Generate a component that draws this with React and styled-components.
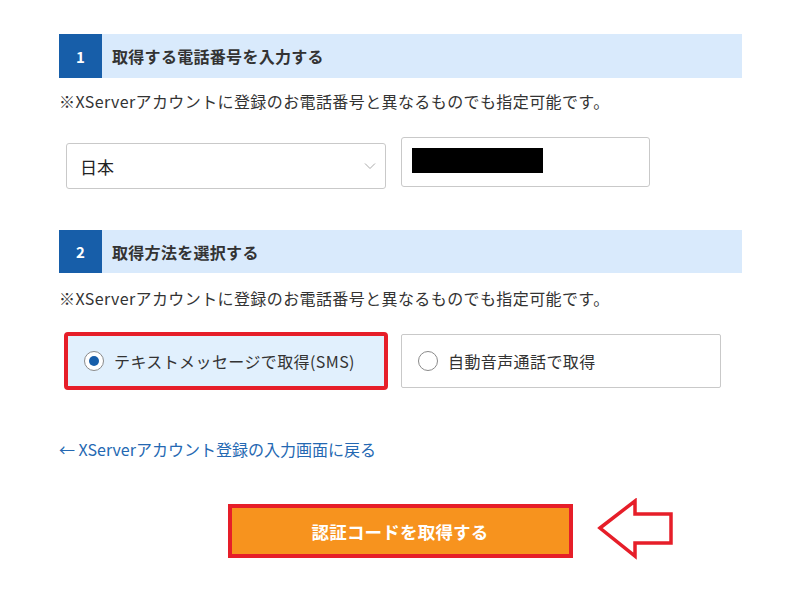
import React from "react";
import styled, { createGlobalStyle } from "styled-components";

const Global = createGlobalStyle`
  html, body { margin: 0; padding: 0; background: #fff; }
  body { font-family: "Noto Sans CJK JP", "Noto Sans", sans-serif; color: #333; }
`;

const Page = styled.div`
  width: 800px;
  height: 592px;
  padding: 34px 0 0 59px;
  box-sizing: border-box;
`;

const Content = styled.div`
  width: 683px;
  display: flex;
  flex-direction: column;
`;

const SectionHeader = styled.div`
  display: flex;
  height: ${(p) => p.$h}px;
  background: #d9eafc;
  margin-top: ${(p) => p.$mt || 0}px;
`;

const Num = styled.div`
  width: 43px;
  background: #175ea9;
  color: #fff;
  font-weight: 700;
  font-size: 15px;
  display: flex;
  align-items: center;
  justify-content: center;
`;

const Title = styled.div`
  padding-left: 10px;
  display: flex;
  align-items: center;
  font-size: 16px;
  font-weight: 700;
  color: #333;
  letter-spacing: 0.3px;
`;

const Note = styled.p`
  margin: ${(p) => p.$mt}px 0 0;
  font-size: 16px;
  line-height: 24px;
  color: #333;
  letter-spacing: 0.4px;
`;

const FieldRow = styled.div`
  display: flex;
  align-items: flex-start;
  margin-top: 24px;
  padding-left: 7px;
  gap: 15px;
`;

const Select = styled.div`
  width: 320px;
  height: 46px;
  margin-top: 6px;
  box-sizing: border-box;
  border: 1px solid #c9c9c9;
  border-radius: 3px;
  display: flex;
  align-items: center;
  justify-content: space-between;
  padding: 0 9px 0 13px;
  font-size: 17px;
  color: #222;
`;

const Input = styled.div`
  width: 249px;
  height: 50px;
  box-sizing: border-box;
  border: 1px solid #c9c9c9;
  border-radius: 3px;
  padding: 10px 0 0 10px;
`;

const Masked = styled.div`
  width: 131px;
  height: 25px;
  background: #000;
`;

const OptionRow = styled.div`
  display: flex;
  align-items: center;
  margin-top: 24px;
  padding-left: 7px;
  gap: 15px;
`;

const Option = styled.label`
  width: 320px;
  height: 54px;
  box-sizing: border-box;
  border: 1px solid #c9c9c9;
  border-radius: 2px;
  display: flex;
  align-items: center;
  padding-left: ${(p) => (p.$selected ? 17 : 16)}px;
  gap: 10px;
  font-size: 16px;
  letter-spacing: 0.4px;
  color: #333;
  background: ${(p) => (p.$selected ? "#e1f0fd" : "#fff")};
  outline: ${(p) => (p.$selected ? "4.5px solid #e61e29" : "none")};
  outline-offset: -2px;
`;

const Radio = styled.span`
  width: 20px;
  height: 20px;
  box-sizing: border-box;
  border-radius: 50%;
  border: 1.5px solid #8a8a8a;
  background: #fff;
  display: flex;
  align-items: center;
  justify-content: center;
  flex-shrink: 0;
  &::after {
    content: "";
    width: 10px;
    height: 10px;
    border-radius: 50%;
    background: ${(p) => (p.$checked ? "#175ea9" : "transparent")};
  }
`;

const BackLink = styled.a`
  margin-top: 49px;
  font-size: 16px;
  line-height: 24px;
  color: #2468b2;
  text-decoration: none;
`;

const ButtonArea = styled.div`
  width: 800px;
  margin-left: -59px;
  margin-top: 43px;
  display: flex;
  justify-content: center;
`;

const ButtonWrap = styled.div`
  position: relative;
`;

const SubmitButton = styled.button`
  width: 345px;
  height: 54px;
  box-sizing: border-box;
  border: 4.5px solid #e61e29;
  background: #f7931e;
  color: #fff;
  font-family: inherit;
  font-size: 17.5px;
  font-weight: 700;
  letter-spacing: 0.2px;
  padding: 0;
  cursor: pointer;
`;

const ArrowMark = styled.svg`
  position: absolute;
  left: 369px;
  top: -6px;
`;

const Chevron = () => (
  <svg width="12" height="8" viewBox="0 0 12 8">
    <path d="M1 1.5 L6 6.5 L11 1.5" fill="none" stroke="#aaa" strokeWidth="1" />
  </svg>
);

export default function App() {
  return (
    <>
      <Global />
      <Page>
        <Content>
          <SectionHeader $h={44}>
            <Num>1</Num>
            <Title>取得する電話番号を入力する</Title>
          </SectionHeader>
          <Note $mt={11}>※XServerアカウントに登録のお電話番号と異なるものでも指定可能です。</Note>
          <FieldRow>
            <Select>
              <span>日本</span>
              <Chevron />
            </Select>
            <Input>
              <Masked />
            </Input>
          </FieldRow>

          <SectionHeader $h={43} $mt={41}>
            <Num>2</Num>
            <Title>取得方法を選択する</Title>
          </SectionHeader>
          <Note $mt={13}>※XServerアカウントに登録のお電話番号と異なるものでも指定可能です。</Note>
          <OptionRow>
            <Option $selected>
              <Radio $checked />
              <span>テキストメッセージで取得(SMS)</span>
            </Option>
            <Option>
              <Radio />
              <span>自動音声通話で取得</span>
            </Option>
          </OptionRow>

          <BackLink href="#">← XServerアカウント登録の入力画面に戻る</BackLink>

          <ButtonArea>
            <ButtonWrap>
              <SubmitButton>認証コードを取得する</SubmitButton>
              <ArrowMark width="78" height="62" viewBox="0 0 78 62">
                <polygon
                  points="3,30 38,3 38,16 74,16 74,45 38,45 38,58"
                  fill="#fff"
                  stroke="#e61e29"
                  strokeWidth="3.5"
                  strokeLinejoin="miter"
                />
              </ArrowMark>
            </ButtonWrap>
          </ButtonArea>
        </Content>
      </Page>
    </>
  );
}
